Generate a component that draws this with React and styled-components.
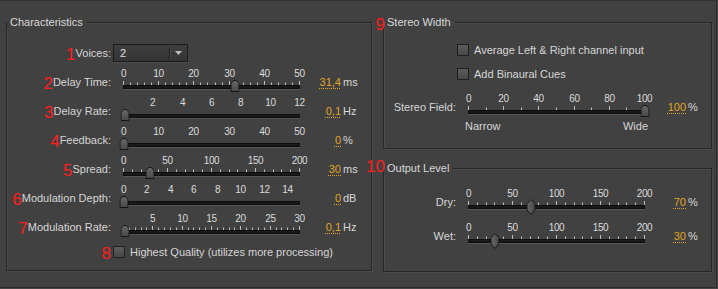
import React from 'react'
import styled, { createGlobalStyle } from 'styled-components'

const GlobalStyle = createGlobalStyle`
  html, body { margin: 0; padding: 0; background: #464646; }
  body { font-family: "Liberation Sans", Arial, sans-serif; }
`;

const BG = '#414141';
const ORANGE = '#e0a526';

const Window = styled.div`
  box-sizing: border-box;
  width: 717px;
  height: 288px;
  background: ${BG};
  border-top: 1px solid #333;
  border-right: 1px solid #2a2a2a;
  border-bottom: 1px solid #2a2a2a;
  padding: 21px 0 0 6px;
  display: flex;
  align-items: flex-start;
  gap: 11px;
  font-size: 11px;
  color: #d6d6d6;
`;

const Column = styled.div`
  display: flex;
  flex-direction: column;
  gap: 19px;
`;

const Group = styled.div`
  box-sizing: border-box;
  position: relative;
  width: ${p => p.$w}px;
  height: ${p => p.$h}px;
  border: 1px solid #262626;
  box-shadow: 1px 1px 0 #4c4c4c, inset 1px 1px 0 #4c4c4c;
  padding-top: ${p => p.$pt}px;
  display: flex;
  flex-direction: column;
`;

const Title = styled.div`
  position: absolute;
  top: -7px;
  left: 0;
  padding: 0 4px 0 3px;
  background: ${BG};
  line-height: 13px;
  color: #d8d8d8;
`;

const Marker = styled.span`
  position: absolute;
  right: 100%;
  margin-right: -1px;
  top: ${p => p.$dy}px;
  color: #ff1e1e;
  font-size: 17px;
  line-height: 17px;
`;

const Red = styled.span`
  color: #ff1e1e;
  font-size: 17px;
  line-height: 0;
  vertical-align: -3px;
  &:not(:last-child) { margin-right: 3px; }
`;

const Row = styled.div`
  display: flex;
  align-items: center;
  height: ${p => p.$h}px;
  margin-top: ${p => p.$mt || 0}px;
  padding-left: ${p => p.$pl || 0}px;
`;

const Label = styled.div`
  flex: none;
  width: ${p => p.$w}px;
  margin-right: 2px;
  text-align: right;
  line-height: 13px;
  white-space: nowrap;
`;

const Select = styled.div`
  box-sizing: border-box;
  width: 75px;
  height: 18px;
  display: flex;
  align-items: center;
  border: 1px solid #1b1b1b;
  background: linear-gradient(#3e3e3e, #353535);
  box-shadow: 0 1px 0 #4e4e4e;
  color: #e2e2e2;
`;

const SelectText = styled.div`
  flex: 1;
  padding-left: 6px;
  line-height: 13px;
`;

const SelectSep = styled.div`
  width: 1px;
  height: 12px;
  background: #1e1e1e;
  box-shadow: 1px 0 0 #4a4a4a;
`;

const SelectArrow = styled.div`
  width: 17px;
  display: flex;
  justify-content: center;
`;

const Check = styled.div`
  box-sizing: border-box;
  flex: none;
  width: 12px;
  height: 12px;
  border: 1px solid #1e1e1e;
  background: linear-gradient(#5c5c5c, #474747);
  margin-right: 5px;
`;

const CheckText = styled.span`
  line-height: 13px;
  white-space: nowrap;
`;

const SliderBox = styled.div`
  flex: none;
  width: 193px;
  height: 29px;
`;

const Rail = styled.div`
  position: relative;
  margin-left: 10px;
  width: 177px;
`;

const Scale = styled.div`
  position: relative;
  height: 11px;
`;

const Mark = styled.span`
  position: absolute;
  top: 0;
  transform: translateX(-50%);
  font-size: 10px;
  letter-spacing: -0.4px;
  line-height: 11px;
  color: #dcdcdc;
  white-space: nowrap;
`;

const Ticks = styled.svg`
  display: block;
`;

const Track = styled.div`
  box-sizing: border-box;
  height: 4px;
  background: #191919;
  border: 1px solid #0e0e0e;
  box-shadow: 0 1px 0 #565656;
`;

const Thumb = styled.svg`
  position: absolute;
  top: ${p => (p.$kind === 'diamond' ? 11 : 12)}px;
  transform: translateX(-50%);
  display: block;
`;

const Value = styled.div`
  flex: none;
  width: 35px;
  text-align: right;
  line-height: 13px;
`;

const Num = styled.span`
  color: ${ORANGE};
  text-decoration: underline dotted ${ORANGE};
  text-underline-offset: 2px;
`;

const Unit = styled.span`
  margin-left: 2px;
  line-height: 13px;
`;

const Ends = styled.div`
  display: flex;
  justify-content: space-between;
  width: 183px;
  line-height: 13px;
`;

function Slider({ min, max, marks, ticks, value, thumb }) {
  const pct = v => (v - min) / (max - min);
  const pos = v => Math.round(pct(v) * 176) + 0.5;
  return (
    <SliderBox>
      <Rail>
        <Scale>
          {marks.map(m => (
            <Mark key={m} style={{ left: pos(m) }}>{m}</Mark>
          ))}
        </Scale>
        <Ticks width="177" height="6">
          {ticks > 0 && Array.from({ length: ticks + 1 }, (_, i) => {
            const x = Math.round((i * 176) / ticks) + 0.5;
            const major = i === 0 || marks.some(m => Math.abs(pct(m) - i / ticks) < 1e-6);
            return <line key={i} x1={x} x2={x} y1={major ? 2 : 3.5} y2={6} stroke="#bdbdbd" />;
          })}
        </Ticks>
        <Track />
        {thumb === 'diamond' ? (
          <Thumb $kind="diamond" width="9" height="16" style={{ left: pos(value) }}>
            <defs>
              <linearGradient id="gd" x1="0" x2="1">
                <stop offset="0" stopColor="#666" />
                <stop offset="1" stopColor="#484848" />
              </linearGradient>
            </defs>
            <polygon points="4.5,0.5 8.5,4.5 8.5,11 4.5,15.5 0.5,11 0.5,4.5" fill="url(#gd)" stroke="#151515" />
          </Thumb>
        ) : (
          <Thumb $kind="house" width="9" height="12" style={{ left: pos(value) }}>
            <defs>
              <linearGradient id="gh" x1="0" y1="0" x2="0" y2="1">
                <stop offset="0" stopColor="#666" />
                <stop offset="1" stopColor="#4a4a4a" />
              </linearGradient>
            </defs>
            <polygon points="0.5,3.5 3,0.5 6,0.5 8.5,3.5 8.5,11.5 0.5,11.5" fill="url(#gh)" stroke="#151515" />
          </Thumb>
        )}
      </Rail>
    </SliderBox>
  );
}

function SliderRow({ n, label, labelW, unit, display, mt, ...s }) {
  return (
    <Row $h={29} $mt={mt}>
      <Label $w={labelW}>
        {n && <Red>{n}</Red>}
        {label}
      </Label>
      <Slider {...s} />
      <Value><Num>{display}</Num></Value>
      <Unit>{unit}</Unit>
    </Row>
  );
}

const characteristics = [
  { n: 2, label: 'Delay Time:', min: 0, max: 50, marks: [0, 10, 20, 30, 40, 50], ticks: 25, value: 31.4, display: '31,4', unit: 'ms' },
  { n: 3, label: 'Delay Rate:', min: 0, max: 12, marks: [2, 4, 6, 8, 10, 12], ticks: 0, value: 0.1, display: '0,1', unit: 'Hz' },
  { n: 4, label: 'Feedback:', min: 0, max: 50, marks: [0, 10, 20, 30, 40, 50], ticks: 0, value: 0, display: '0', unit: '%' },
  { n: 5, label: 'Spread:', min: 0, max: 200, marks: [0, 50, 100, 150, 200], ticks: 20, value: 30, display: '30', unit: 'ms' },
  { n: 6, label: 'Modulation Depth:', min: 0, max: 15, marks: [0, 2, 4, 6, 8, 10, 12, 14], ticks: 0, value: 0, display: '0', unit: 'dB' },
  { n: 7, label: 'Modulation Rate:', min: 0, max: 30, marks: [5, 10, 15, 20, 25, 30], ticks: 30, value: 0.1, display: '0,1', unit: 'Hz' },
];

const output = [
  { label: 'Dry:', value: 70, display: '70' },
  { label: 'Wet:', value: 30, display: '30' },
];

export default function App() {
  return (
    <>
      <GlobalStyle />
      <Window>
        <Group $w={366} $h={249} $pt={21}>
          <Title>Characteristics</Title>
          <Row $h={18}>
            <Label $w={104}><Red>1</Red>Voices:</Label>
            <Select>
              <SelectText>2</SelectText>
              <SelectSep />
              <SelectArrow>
                <svg width="7" height="4"><polygon points="0,0 7,0 3.5,4" fill="#bcbcbc" /></svg>
              </SelectArrow>
            </Select>
          </Row>
          <div style={{ marginTop: 6 }}>
            {characteristics.map(s => (
              <SliderRow key={s.label} labelW={104} thumb="house" {...s} />
            ))}
          </div>
          <Row $h={12} $mt={4}>
            <Label $w={104}><Red>8</Red></Label>
            <Check />
            <CheckText>Highest Quality (utilizes more processing)</CheckText>
          </Row>
        </Group>

        <Column>
          <Group $w={329} $h={127} $pt={21}>
            <Title><Marker $dy={0}>9</Marker>Stereo Width</Title>
            <Row $h={12} $pl={73}>
              <Check />
              <CheckText>Average Left &amp; Right channel input</CheckText>
            </Row>
            <Row $h={12} $pl={73} $mt={12}>
              <Check />
              <CheckText>Add Binaural Cues</CheckText>
            </Row>
            <SliderRow
              mt={13}
              labelW={72}
              label="Stereo Field:"
              min={0}
              max={100}
              marks={[0, 20, 40, 60, 80, 100]}
              ticks={10}
              value={100}
              display="100"
              unit="%"
              thumb="house"
            />
            <Row $h={12} $mt={-2} $pl={81}>
              <Ends><span>Narrow</span><span>Wide</span></Ends>
            </Row>
          </Group>

          <Group $w={329} $h={104} $pt={19}>
            <Title><Marker $dy={-4}>10</Marker>Output Level</Title>
            {output.map((o, i) => (
              <SliderRow
                key={o.label}
                mt={i ? 5 : 0}
                labelW={72}
                label={o.label}
                min={0}
                max={200}
                marks={[0, 50, 100, 150, 200]}
                ticks={20}
                value={o.value}
                display={o.display}
                unit="%"
                thumb="diamond"
              />
            ))}
          </Group>
        </Column>
      </Window>
    </>
  );
}
